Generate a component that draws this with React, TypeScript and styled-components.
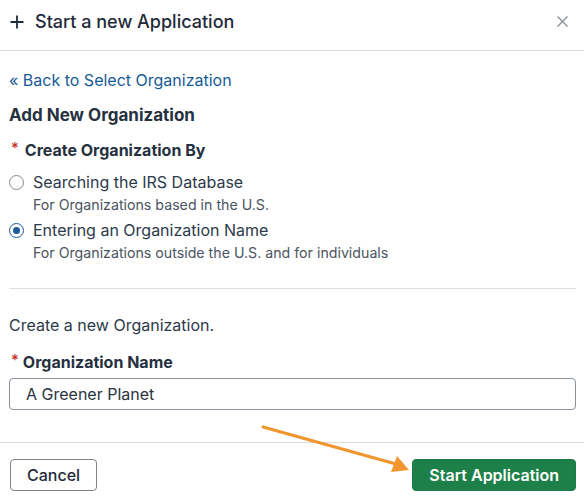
import React, { useState } from "react";
import styled, { createGlobalStyle } from "styled-components";

const GlobalStyle = createGlobalStyle`
  * { box-sizing: border-box; }
  html, body { margin: 0; padding: 0; background: #ffffff; }
  body {
    font-family: Inter, "Noto Sans", "Liberation Sans", sans-serif;
    color: #2d3748;
    -webkit-font-smoothing: antialiased;
  }
`;

const Dialog = styled.div`
  position: relative;
  width: 584px;
  height: 498px;
  background: #fff;
  display: flex;
  flex-direction: column;
  overflow: hidden;
`;

const Header = styled.header`
  height: 51px;
  display: flex;
  align-items: center;
  justify-content: space-between;
  padding: 0 10px 7px 10px;
  border-bottom: 1px solid #dcdcdc;
`;

const Title = styled.h2`
  margin: 0;
  display: flex;
  align-items: center;
  gap: 11px;
  font-size: 18px;
  font-weight: 500;
  color: #1f2a3a;
`;

const CloseButton = styled.button`
  border: 0;
  background: none;
  padding: 0;
  width: 20px;
  height: 20px;
  display: flex;
  align-items: center;
  justify-content: center;
  margin-right: 2px;
  color: #8a8f96;
  cursor: pointer;
`;

const Body = styled.main`
  flex: 1;
  padding: 19px 8px 0 9px;
  display: flex;
  flex-direction: column;
`;

const BackLink = styled.a`
  font-size: 16px;
  line-height: 20px;
  color: #175b97;
  text-decoration: none;
  cursor: pointer;
`;

const SectionHeading = styled.h3`
  margin: 15px 0 0;
  font-size: 17px;
  line-height: 20px;
  font-weight: 700;
  color: #26313f;
`;

const FieldLabel = styled.div<{ $gap: number; $starGap: number }>`
  margin-top: ${(p) => p.$gap}px;
  font-size: 16px;
  line-height: 20px;
  font-weight: 700;
  color: #26313f;
  display: flex;
  align-items: flex-start;
  gap: ${(p) => p.$starGap}px;
`;

const Asterisk = styled.span`
  color: #c4302b;
  font-weight: 500;
  font-size: 15px;
  line-height: 16px;
  padding-left: 2px;
`;

const RadioGroup = styled.div`
  margin-top: 12px;
  display: flex;
  flex-direction: column;
  gap: 6px;
`;

const Option = styled.label`
  display: grid;
  grid-template-columns: 15px 1fr;
  column-gap: 9px;
  cursor: pointer;
`;

const RadioCircle = styled.span<{ $checked: boolean }>`
  width: 15px;
  height: 15px;
  margin-top: 3px;
  border-radius: 50%;
  border: 1px solid ${(p) => (p.$checked ? "#1d5a9a" : "#858b93")};
  display: flex;
  align-items: center;
  justify-content: center;
  &::after {
    content: "";
    width: 7px;
    height: 7px;
    border-radius: 50%;
    background: ${(p) => (p.$checked ? "#1d5a9a" : "transparent")};
  }
`;

const OptionText = styled.span`
  font-size: 16px;
  line-height: 20px;
  color: #2d3a4a;
`;

const OptionHint = styled.span`
  grid-column: 2;
  margin-top: 4px;
  font-size: 14.2px;
  line-height: 18px;
  color: #4a5462;
`;

const Divider = styled.hr`
  margin: 26px 0 0;
  border: 0;
  border-top: 1px solid #dedede;
`;

const Intro = styled.p`
  margin: 26px 0 0;
  font-size: 16px;
  line-height: 20px;
  color: #2d3a4a;
`;

const TextInput = styled.input`
  margin-top: 6px;
  height: 32px;
  width: 100%;
  padding: 0 16px;
  border: 1px solid #8a929c;
  border-radius: 4px;
  font-family: inherit;
  font-size: 16px;
  color: #2a3442;
  outline: none;
`;

const Footer = styled.footer`
  height: 56px;
  border-top: 1px solid #dcdcdc;
  padding: 16px 8px 0 10px;
  display: flex;
  justify-content: space-between;
  align-items: flex-start;
`;

const Button = styled.button<{ $primary?: boolean }>`
  height: 32px;
  padding: 0 16px;
  border-radius: 4px;
  font-family: inherit;
  font-size: 16px;
  font-weight: ${(p) => (p.$primary ? 600 : 500)};
  cursor: pointer;
  border: 1px solid ${(p) => (p.$primary ? "#1b7a45" : "#7d848d")};
  background: ${(p) => (p.$primary ? "#1e8049" : "#ffffff")};
  color: ${(p) => (p.$primary ? "#ffffff" : "#1f2a3a")};
`;

const Pointer = styled.svg`
  position: absolute;
  left: 0;
  top: 0;
  pointer-events: none;
`;

const options = [
  {
    id: "irs",
    label: "Searching the IRS Database",
    hint: "For Organizations based in the U.S.",
  },
  {
    id: "name",
    label: "Entering an Organization Name",
    hint: "For Organizations outside the U.S. and for individuals",
  },
];

export default function App() {
  const [method, setMethod] = useState("name");
  const [orgName, setOrgName] = useState("A Greener Planet");

  return (
    <>
      <GlobalStyle />
      <Dialog>
        <Header>
          <Title>
            <svg width="14" height="14" viewBox="0 0 14 14" aria-hidden>
              <path d="M7 0.5v13M0.5 7h13" stroke="#1f2a3a" strokeWidth="1.8" />
            </svg>
            Start a new Application
          </Title>
          <CloseButton aria-label="Close">
            <svg width="11" height="11" viewBox="0 0 11 11">
              <path d="M0.5 0.5l10 10M10.5 0.5l-10 10" stroke="currentColor" strokeWidth="1.4" />
            </svg>
          </CloseButton>
        </Header>

        <Body>
          <BackLink>« Back to Select Organization</BackLink>
          <SectionHeading>Add New Organization</SectionHeading>
          <FieldLabel $gap={15} $starGap={6}>
            <Asterisk>*</Asterisk>
            Create Organization By
          </FieldLabel>
          <RadioGroup>
            {options.map((o) => (
              <Option key={o.id} onClick={() => setMethod(o.id)}>
                <RadioCircle $checked={method === o.id} />
                <OptionText>{o.label}</OptionText>
                <OptionHint>{o.hint}</OptionHint>
              </Option>
            ))}
          </RadioGroup>
          <Divider />
          <Intro>Create a new Organization.</Intro>
          <FieldLabel $gap={17} $starGap={4}>
            <Asterisk>*</Asterisk>
            Organization Name
          </FieldLabel>
          <TextInput value={orgName} onChange={(e) => setOrgName(e.target.value)} />
        </Body>

        <Footer>
          <Button>Cancel</Button>
          <Button $primary>Start Application</Button>
        </Footer>

        <Pointer width="584" height="498" viewBox="0 0 584 498">
          <line x1="263" y1="427" x2="396" y2="464" stroke="#f1962f" strokeWidth="3" strokeLinecap="round" />
          <polygon points="409,470 391,472 397,456" fill="#f1962f" />
        </Pointer>
      </Dialog>
    </>
  );
}
